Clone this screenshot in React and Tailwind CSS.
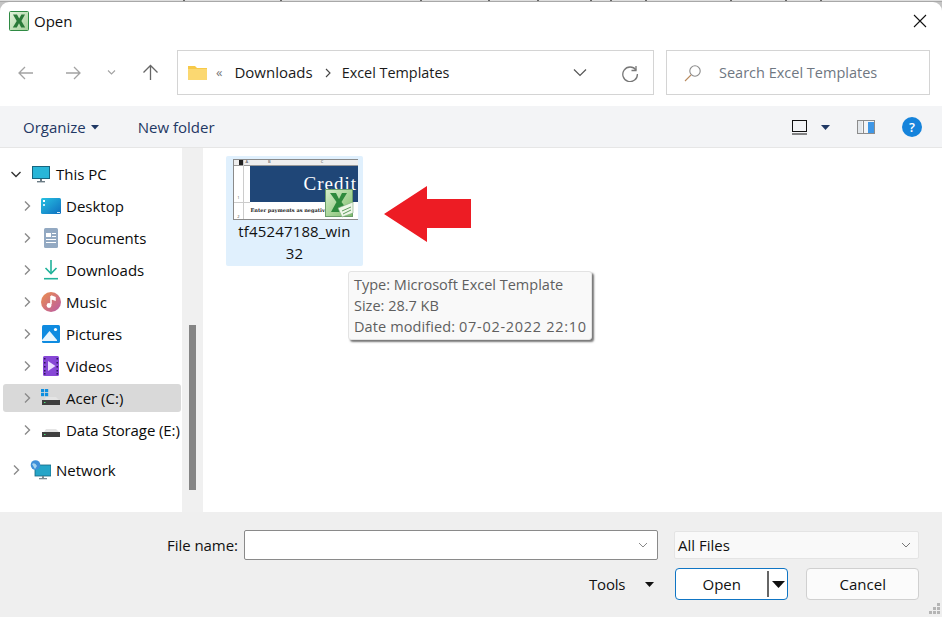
import React from "react";

const Chev = ({ open, className = "" }) => (
  <svg width="12" height="12" viewBox="0 0 12 12" className={className} fill="none" strokeWidth="1.4" stroke={open ? "#333" : "#8a8a8a"}>
    {open ? <path d="M1.5 4 L6 8.5 L10.5 4" /> : <path d="M4 1.5 L8.5 6 L4 10.5" />}
  </svg>
);

const XL = ({ size = 20 }) => (
  <svg width={size} height={size} viewBox="0 0 20 20">
    <defs>
      <linearGradient id="xlg" x1="0" y1="0" x2="1" y2="1">
        <stop offset="0" stopColor="#e4f3dd" />
        <stop offset="1" stopColor="#a5d09a" />
      </linearGradient>
    </defs>
    <rect x="0.5" y="0.5" width="19" height="19" rx="1" fill="url(#xlg)" stroke="#2f8a43" />
    <path d="M4 3.5 H8 L10.2 7.6 L12.4 3.5 H16 L12.4 10 L16.2 16.5 H12.2 L10 12.3 L7.8 16.5 H3.8 L7.7 10 Z" fill="#2b7a39" />
  </svg>
);

const Monitor = () => (
  <svg width="18" height="17" viewBox="0 0 18 17">
    <rect x="0.5" y="0.5" width="17" height="12" fill="#29b6d8" stroke="#17657f" />
    <rect x="8" y="13" width="2" height="2" fill="#6b7b84" />
    <rect x="5" y="15" width="8" height="1.4" fill="#6b7b84" />
  </svg>
);
const Desktop = () => (
  <svg width="20" height="16" viewBox="0 0 20 16">
    <defs>
      <linearGradient id="dg" x1="0" y1="0" x2="1" y2="1">
        <stop offset="0" stopColor="#27c2e2" />
        <stop offset="1" stopColor="#0f6fc0" />
      </linearGradient>
    </defs>
    <rect width="20" height="16" rx="1.5" fill="url(#dg)" />
    <rect x="2" y="2" width="2" height="2" fill="#fff" />
    <rect x="2" y="6" width="2" height="2" fill="#cfeefa" />
    <rect x="16" y="14" width="3" height="1" fill="#d8eefa" />
  </svg>
);
const Doc = () => (
  <svg width="14" height="20" viewBox="0 0 14 20">
    <rect width="14" height="20" rx="1.5" fill="#93a9c2" />
    <rect x="2" y="5" width="5" height="4" fill="#fff" />
    <rect x="8" y="5" width="4" height="1" fill="#fff" />
    <rect x="8" y="8" width="4" height="1" fill="#fff" />
    <rect x="2" y="11" width="10" height="1" fill="#fff" />
    <rect x="2" y="14" width="10" height="1" fill="#fff" />
  </svg>
);
const Down = () => (
  <svg width="14" height="20" viewBox="0 0 14 20" fill="none" stroke="#1fb29a" strokeWidth="1.6">
    <path d="M7 0 V13" />
    <path d="M1.5 8 L7 13.5 L12.5 8" />
    <path d="M0 18.7 H14" />
  </svg>
);
const Music = () => (
  <svg width="20" height="20" viewBox="0 0 20 20">
    <defs>
      <linearGradient id="mg" x1="0" y1="0" x2="1" y2="1">
        <stop offset="0" stopColor="#ec8f4c" />
        <stop offset="1" stopColor="#b95aa6" />
      </linearGradient>
    </defs>
    <circle cx="10" cy="10" r="10" fill="url(#mg)" />
    <path d="M10 4 L10 12.5 M10 4 L14 5.5 L14 8 L10 6.5" stroke="#fff" strokeWidth="1.5" fill="#fff" />
    <circle cx="8" cy="13.5" r="2.4" fill="#fff" />
  </svg>
);
const Pics = () => (
  <svg width="18" height="18" viewBox="0 0 18 18">
    <rect width="18" height="18" rx="1.5" fill="#0f8be0" />
    <circle cx="13.5" cy="4.5" r="1.6" fill="#fff" />
    <path d="M0 15 L7.5 6 L15 15 V16 H0 Z" fill="#e8f5fd" />
  </svg>
);
const Vid = () => (
  <svg width="16" height="20" viewBox="0 0 16 20">
    <rect width="16" height="20" rx="1.5" fill="#8747d6" />
    <path d="M5 5 L12.5 10 L5 15 Z" fill="#eadcff" />
    {[2, 6, 10, 14, 17].map((y) => (
      <g key={y}>
        <rect x="1" y={y} width="1.5" height="1.5" fill="#2c1458" />
        <rect x="13.5" y={y} width="1.5" height="1.5" fill="#2c1458" />
      </g>
    ))}
  </svg>
);
const Drive = ({ win }) => (
  <svg width="20" height="18" viewBox="0 0 20 18">
    {win && (
      <g fill="#0f8fe0">
        <rect x="0" y="0" width="3.2" height="3.2" />
        <rect x="4" y="0" width="3.2" height="3.2" />
        <rect x="0" y="4" width="3.2" height="3.2" />
        <rect x="4" y="4" width="3.2" height="3.2" />
      </g>
    )}
    <path d="M3 11 L5 8 H15 L18 11 Z" fill="#e4e4e4" />
    <rect x="1" y="11" width="18" height="5" fill="#3f3f3f" />
    <rect x="3" y="13" width="1.5" height="1" fill="#4fe07a" />
  </svg>
);
const Net = () => (
  <svg width="21" height="20" viewBox="0 0 21 20">
    <rect x="5" y="5" width="16" height="11" fill="#25a5c8" stroke="#15657f" strokeWidth="0.8" />
    <rect x="12" y="16" width="2" height="2" fill="#7a8a92" />
    <rect x="9" y="18" width="8" height="1.3" fill="#7a8a92" />
    <circle cx="5.5" cy="5" r="4.8" fill="#3f8ed8" />
    <path d="M2 4 Q5 2 7 6 L5 9 Z" fill="#a7d3ee" />
  </svg>
);

const Row = ({ depth = 1, open, icon, label, selected, className = "", labelClass = "" }) => (
  <div className={`h-8 flex items-center relative ${className}`}>
    {selected && <div className="absolute left-[3px] right-[1px] top-[2px] h-7 rounded-[3px] bg-[#d9d9d9]" />}
    <div className={`relative flex items-center ${depth === 0 ? "pl-[10px]" : "pl-[21px]"}`}>
      <Chev open={open} />
      <div className={`flex justify-center w-[21px] ${depth === 0 ? "ml-[8px]" : "ml-[7px]"}`}>{icon}</div>
      <span className={`ml-[5px] text-[15px] text-[#0b0b0b] whitespace-nowrap ${labelClass}`}>{label}</span>
    </div>
  </div>
);

const NavArrow = ({ d, stroke }) => (
  <svg width="16" height="16" viewBox="0 0 16 16" fill="none" stroke={stroke} strokeWidth="1.3">
    <path d={d} />
  </svg>
);

const ticks = [183, 280, 420, 488, 537, 590, 610, 645, 730, 785, 820];

export default function App() {
  return (
    <div className="w-[942px] h-[617px] overflow-hidden bg-[#c4c4c4] flex flex-col" style={{ fontFamily: '"Open Sans","Noto Sans",sans-serif' }}>
      <svg width="942" height="2" viewBox="0 0 942 2" className="shrink-0 block">
        <rect width="942" height="1" fill="#dedede" />
        <rect y="1" width="942" height="1" fill="#a8a8a8" />
        {ticks.map((x) => (
          <rect key={x} x={x} y="0" width="2" height="1" fill="#666" />
        ))}
      </svg>
      <div className="h-[615px] bg-white rounded-t-[9px] flex flex-col relative">
        {/* title bar */}
        <div className="h-[38px] shrink-0 flex items-center pl-[9px] pr-[15px]">
          <XL />
          <span className="ml-[5px] text-[15px] text-[#111]">Open</span>
          <svg className="ml-auto" width="14" height="14" viewBox="0 0 14 14" stroke="#111" strokeWidth="1.1">
            <path d="M1 1 L13 13 M13 1 L1 13" />
          </svg>
        </div>
        {/* nav bar */}
        <div className="h-[66px] shrink-0 flex items-start pt-[10px]">
          <div className="w-[177px] h-[45px] flex items-center pl-[18px] shrink-0">
            <NavArrow stroke="#a3a3a3" d="M15 8 H1 M7 2 L1 8 L7 14" />
            <span className="w-[31px]" />
            <NavArrow stroke="#a3a3a3" d="M1 8 H15 M9 2 L15 8 L9 14" />
            <svg className="ml-[26px]" width="9" height="7" viewBox="0 0 9 7" fill="none" stroke="#a3a3a3" strokeWidth="1.1"><path d="M1 1.5 L4.5 5 L8 1.5" /></svg>
            <svg className="ml-[26px]" width="17" height="17" viewBox="0 0 17 17" fill="none" stroke="#666" strokeWidth="1.3"><path d="M8.5 16 V2 M1.5 8.5 L8.5 1.5 L15.5 8.5" /></svg>
          </div>
          <div className="w-[477px] h-[45px] border border-[#d4d4d4] flex items-center pl-[10px] pr-[14px] shrink-0">
            <svg width="19" height="15" viewBox="0 0 19 15">
              <path d="M0 1 H7 L9 3 H19 V15 H0 Z" fill="#f7c948" />
              <path d="M0 4 H19 V15 H0 Z" fill="#fbd871" />
            </svg>
            <span className="ml-[9px] text-[13px] text-[#777] leading-none">«</span>
            <span className="ml-[12px] text-[15px] text-[#1a1a1a]">Downloads</span>
            <svg className="ml-[11px]" width="8" height="10" viewBox="0 0 8 10" fill="none" stroke="#444" strokeWidth="1.1"><path d="M2 1 L6 5 L2 9" /></svg>
            <span className="ml-[10px] text-[14.4px] text-[#1a1a1a]">Excel Templates</span>
            <svg className="ml-auto" width="14" height="9" viewBox="0 0 14 9" fill="none" stroke="#555" strokeWidth="1.2"><path d="M1 1.5 L7 7.5 L13 1.5" /></svg>
            <svg className="ml-[34px]" width="18" height="18" viewBox="0 0 18 18" fill="none" stroke="#777" strokeWidth="1.3">
              <path d="M15 2 V6.5 H10.5" />
              <path d="M15 6 A7.3 7.3 0 1 0 16.4 10" />
            </svg>
          </div>
          <div className="ml-[12px] w-[264px] h-[45px] border border-[#d4d4d4] flex items-center pl-[17px] shrink-0">
            <svg width="18" height="18" viewBox="0 0 18 18" fill="none" stroke="#8a8a8a" strokeWidth="1.1">
              <circle cx="11" cy="7" r="5.2" />
              <path d="M7 11 L1 17" stroke="#b98a5e" />
            </svg>
            <span className="ml-[17px] text-[14.5px] text-[#6f7782]">Search Excel Templates</span>
          </div>
        </div>
        {/* toolbar */}
        <div className="h-[42px] shrink-0 bg-[#f3f4f6] border-b border-[#e6e6e6] flex items-center pl-[23px] pr-[20px] pt-[1px]">
          <span className="text-[15px] text-[#1f3864]">Organize</span>
          <svg className="ml-[5px]" width="8" height="5" viewBox="0 0 8 5"><path d="M0 0 H8 L4 4.5 Z" fill="#1f3864" /></svg>
          <span className="ml-[39px] text-[15px] text-[#1f3864]">New folder</span>
          <svg className="ml-auto" width="15" height="15" viewBox="0 0 15 15" fill="none" stroke="#111">
            <rect x="0.5" y="0.5" width="14" height="11" />
            <path d="M0 14 H15" />
          </svg>
          <svg className="ml-[14px]" width="9" height="5" viewBox="0 0 9 5"><path d="M0 0 H9 L4.5 5 Z" fill="#1f3864" /></svg>
          <svg className="ml-[27px]" width="18" height="14" viewBox="0 0 18 14">
            <rect x="0.5" y="0.5" width="17" height="13" fill="#f3f4f6" stroke="#8c8c8c" />
            <rect x="1" y="1" width="4" height="12" fill="#e2e6ea" />
            <rect x="11" y="2" width="6" height="11" fill="#3f97e6" />
            <rect x="6" y="1" width="1" height="12" fill="#8c8c8c" />
          </svg>
          <div className="ml-[27px] w-5 h-5 rounded-full bg-[#1583db] flex items-center justify-center text-white text-[13px] font-semibold leading-none">?</div>
        </div>
        {/* body */}
        <div className="h-[364px] shrink-0 flex">
          <div className="w-[182px] shrink-0 pt-[10px] overflow-hidden">
            <Row depth={0} open icon={<Monitor />} label="This PC" />
            <Row icon={<Desktop />} label="Desktop" />
            <Row icon={<Doc />} label="Documents" />
            <Row icon={<Down />} label="Downloads" />
            <Row icon={<Music />} label="Music" />
            <Row icon={<Pics />} label="Pictures" />
            <Row icon={<Vid />} label="Videos" />
            <Row icon={<Drive win />} label="Acer (C:)" selected />
            <Row icon={<Drive />} label="Data Storage (E:)" labelClass="tracking-[-0.1px]" />
            <Row depth={0} icon={<Net />} label="Network" className="mt-2" />
          </div>
          <div className="w-[21px] shrink-0 bg-[#f0f0f0] pt-[177px] pl-[7px]">
            <div className="w-[7px] h-[165px] bg-[#858585]" />
          </div>
          <div className="flex-1 relative pl-[23px] pt-[8px]">
            <div className="w-[137px] h-[110px] bg-[#e0f0fd] rounded-[2px] flex flex-col items-center pt-[3px]">
              <div className="w-[125px] h-[61px] ml-[1px] bg-white border-y border-l border-[#8a8a8a] relative overflow-hidden">
                <div className="h-[6px] bg-[#eeeeee] border-b border-[#999] flex text-[4px] leading-none text-[#444]">
                  <span className="ml-[5px] w-[5px] h-[5px] bg-[#222]" />
                  <span className="ml-[2px]">A</span>
                  <span className="ml-[20px]">B</span>
                  <span className="ml-[50px]">C</span>
                </div>
                <div className="ml-[16px] h-[36px] bg-[#1f4677] flex items-center pl-[54px] text-[19px] font-medium tracking-[1px] text-white whitespace-nowrap" style={{ fontFamily: '"Liberation Serif",serif' }}>Credit</div>
                <div className="ml-[17px] mt-[6px] text-[5px] font-bold text-[#222] whitespace-nowrap leading-none" style={{ fontFamily: '"DejaVu Serif",serif' }}>Enter payments as negative</div>
                <div className="absolute left-[9px] top-0 bottom-0 w-px bg-[#cccccc]" />
                <div className="absolute left-0 top-[42px] w-[16px] h-px bg-[#cccccc]" />
                <div className="absolute left-0 top-[36px] w-[10px] text-center text-[4px] leading-none text-[#444]">1</div>
                <div className="absolute left-0 bottom-0 w-[10px] text-center text-[4px] leading-none text-[#444]">2</div>
              </div>
              <div className="absolute left-[122px] top-[41px]">
                <svg width="30" height="29" viewBox="0 0 30 29">
                  <defs>
                    <linearGradient id="xb" x1="0" y1="0" x2="1" y2="1">
                      <stop offset="0" stopColor="#d8eecb" />
                      <stop offset="1" stopColor="#7cbd6a" />
                    </linearGradient>
                  </defs>
                  <rect x="0.5" y="0.5" width="27" height="27" fill="url(#xb)" stroke="#6b9e6a" />
                  <path d="M5 4 H11 L14 10 L17 4 H22 L16.5 13 L21 19 L14 23 H6 L11.5 13 Z" fill="#2f8a3d" />
                  <path d="M13 19 L28 13 V24 L17 28 Z" fill="#eef6e8" stroke="#7aa77a" strokeWidth="0.6" />
                  <path d="M17 22 L26 18 M18 25 L26 21" stroke="#5d9c5d" strokeWidth="1" />
                </svg>
              </div>
              <div className="text-[15px] tracking-[0.15px] leading-[22px] text-[#111] text-center">tf45247188_win<br />32</div>
            </div>
            {/* arrow */}
            <svg className="absolute left-[181px] top-[38px]" width="87" height="56" viewBox="0 0 87 56">
              <path d="M0 28 L43 0 V13 H87 V42 H43 V56 Z" fill="#ed1c24" />
            </svg>
            {/* tooltip */}
            <div className="absolute left-[145px] top-[123px] w-[244px] h-[69px] bg-[#f9f9f9] border border-[#e3e3e3] rounded-[3px] shadow-[2px_2px_2px_#777] pl-[5px] pt-[2px] text-[14.5px] leading-[21px] text-[#5f5f5f] whitespace-nowrap">
              <div>Type: Microsoft Excel Template</div>
              <div>Size: 28.7 KB</div>
              <div className="tracking-[0.1px]">Date modified: <span className="tracking-[0.72px]">07-02-2022 22:10</span></div>
            </div>
          </div>
        </div>
        {/* footer */}
        <div className="flex-1 bg-[#efefef] relative pt-[18px]">
          <div className="flex items-center h-[30px]">
            <span className="ml-[167px] w-[77px] text-[15px] text-[#111] tracking-[-0.05px]">File name:</span>
            <div className="w-[414px] h-[30px] bg-white border border-[#8a8a8a] rounded-[2px] flex items-center justify-end pr-[9px]">
              <svg width="10" height="6" viewBox="0 0 10 6" fill="none" stroke="#888" strokeWidth="1"><path d="M1 1 L5 5 L9 1" /></svg>
            </div>
            <div className="ml-[16px] w-[245px] h-[28px] bg-[#f9f9f9] border border-[#e4e4e4] rounded-[2px] flex items-center pl-[3px] pr-[7px]">
              <span className="text-[15px] text-[#111]">All Files</span>
              <svg className="ml-auto" width="10" height="6" viewBox="0 0 10 6" fill="none" stroke="#777" strokeWidth="1"><path d="M1 1 L5 5 L9 1" /></svg>
            </div>
          </div>
          <div className="flex items-center h-[32px] mt-[8px]">
            <span className="ml-[589px] text-[15px] text-[#111] tracking-[-0.2px]">Tools</span>
            <svg className="ml-[20px]" width="9" height="5" viewBox="0 0 9 5"><path d="M0 0 H9 L4.5 5 Z" fill="#111" /></svg>
            <div className="ml-[21px] w-[113px] h-[32px] bg-white border border-[#0f75c4] rounded-[4px] flex items-center">
              <span className="w-[91px] text-center text-[15px] text-[#111]">Open</span>
              <span className="w-[2px] h-[26px] bg-[#666]" />
              <svg className="ml-[3px]" width="13" height="7" viewBox="0 0 13 7"><path d="M0 0 H13 L6.5 7 Z" fill="#111" /></svg>
            </div>
            <div className="ml-[18px] w-[113px] h-[32px] bg-[#fbfbfb] border border-[#d0d0d0] rounded-[4px] flex items-center justify-center text-[15px] text-[#111]">Cancel</div>
          </div>
          <svg className="absolute right-[1px] bottom-[1px]" width="13" height="13" viewBox="0 0 13 13" fill="#b5b5b5">
            <rect x="9" y="0" width="3" height="3" />
            <rect x="5" y="4" width="3" height="3" />
            <rect x="9" y="4" width="3" height="3" />
            <rect x="1" y="8" width="3" height="3" />
            <rect x="5" y="8" width="3" height="3" />
            <rect x="9" y="8" width="3" height="3" />
          </svg>
        </div>
      </div>
    </div>
  );
}
